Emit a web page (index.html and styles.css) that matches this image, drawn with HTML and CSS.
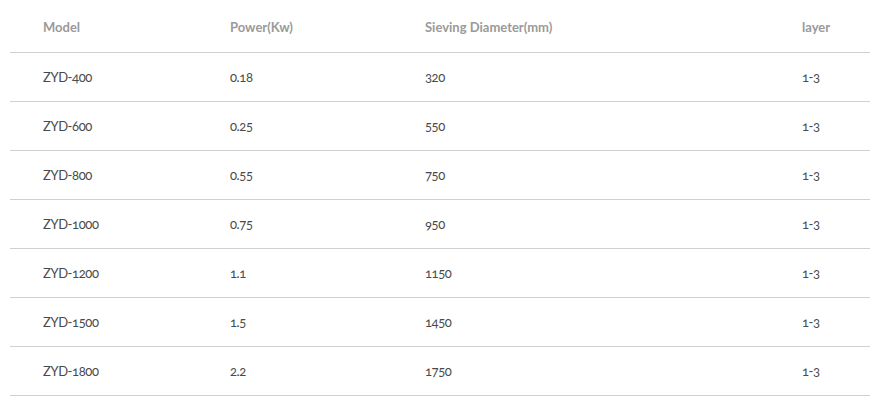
FILE: index.html
```html
<!DOCTYPE html>
<html lang="en">
<head>
<meta charset="utf-8">
<title>Specs</title>
<link rel="stylesheet" href="styles.css">
</head>
<body>
<table class="spec">
  <colgroup>
    <col class="c1"><col class="c2"><col class="c3"><col class="c4">
  </colgroup>
  <thead>
    <tr><th>Model</th><th>Power(Kw)</th><th>Sieving Diameter(mm)</th><th>layer</th></tr>
  </thead>
  <tbody>
    <tr><td>ZYD-400</td><td>0.18</td><td>320</td><td>1-3</td></tr>
    <tr><td>ZYD-600</td><td>0.25</td><td>550</td><td>1-3</td></tr>
    <tr><td>ZYD-800</td><td>0.55</td><td>750</td><td>1-3</td></tr>
    <tr><td>ZYD-1000</td><td>0.75</td><td>950</td><td>1-3</td></tr>
    <tr><td>ZYD-1200</td><td>1.1</td><td>1150</td><td>1-3</td></tr>
    <tr><td>ZYD-1500</td><td>1.5</td><td>1450</td><td>1-3</td></tr>
    <tr><td>ZYD-1800</td><td>2.2</td><td>1750</td><td>1-3</td></tr>
  </tbody>
</table>
</body>
</html>
```
FILE: styles.css
```css
html, body {
  margin: 0;
  padding: 0;
  background: #fff;
}
body {
  padding: 0 8px 0 10px;
  font-family: Lato, "Open Sans", sans-serif;
  font-variant-numeric: oldstyle-nums;
}
.spec {
  width: 860px;
  border-collapse: collapse;
  table-layout: fixed;
}
.c1 { width: 187px; }
.c2 { width: 195px; }
.c3 { width: 377px; }
.c4 { width: 101px; }
.spec th, .spec td {
  text-align: left;
  padding: 0 0 0 33px;
  border-bottom: 1px solid #d0d0d0;
  vertical-align: top;
}
.spec th {
  font-size: 13px;
  padding-top: 2px;
  line-height: 50px;
  font-weight: 700;
  color: #9a9a9a;
}
.spec td {
  font-size: 13px;
  letter-spacing: -0.4px;
  padding-top: 1px;
  line-height: 47px;
  font-weight: 400;
  color: #4a4a4a;
}
```
